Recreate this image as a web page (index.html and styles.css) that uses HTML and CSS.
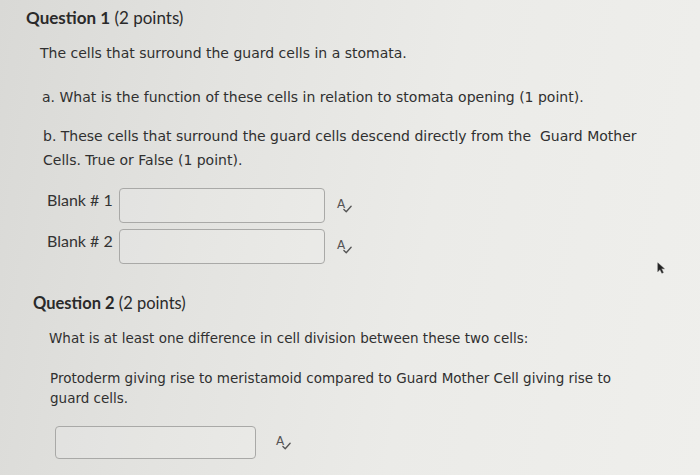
FILE: index.html
```html
<!DOCTYPE html>
<html>
<head>
<meta charset="utf-8">
<link rel="stylesheet" href="styles.css">
</head>
<body>
<div class="screen">
  <section class="question q1">
    <h2 class="qtitle"><b>Question 1</b> (2 points)</h2>
    <div class="qbody">
      <p class="intro">The cells that surround the guard cells in a stomata.</p>
      <p class="part-a">a. What is the function of these cells in relation to stomata opening (1 point).</p>
      <p class="part-b">b. These cells that surround the guard cells descend directly from the&nbsp; Guard Mother Cells. True or False (1 point).</p>
      <div class="blanks">
        <div class="blank-row">
          <span class="blank-label">Blank # 1</span>
          <span class="field"></span>
          <span class="spell"><span class="spell-a">A</span><svg class="spell-check" viewBox="0 0 10 8"><path d="M1 4.5 L3.6 7 L9 1" fill="none" stroke="#555" stroke-width="1.5" stroke-linecap="round" stroke-linejoin="round"/></svg></span>
        </div>
        <div class="blank-row">
          <span class="blank-label">Blank # 2</span>
          <span class="field"></span>
          <span class="spell"><span class="spell-a">A</span><svg class="spell-check" viewBox="0 0 10 8"><path d="M1 4.5 L3.6 7 L9 1" fill="none" stroke="#555" stroke-width="1.5" stroke-linecap="round" stroke-linejoin="round"/></svg></span>
        </div>
      </div>
    </div>
  </section>
  <section class="question q2">
    <h2 class="qtitle"><b>Question 2</b> (2 points)</h2>
    <div class="qbody">
      <p class="prompt">What is at least one difference in cell division between these two cells:</p>
      <p class="detail">Protoderm giving rise to meristamoid compared to Guard Mother Cell giving rise to guard cells.</p>
      <div class="answer-row">
        <span class="field wide"></span>
        <span class="spell"><span class="spell-a">A</span><svg class="spell-check" viewBox="0 0 10 8"><path d="M1 4.5 L3.6 7 L9 1" fill="none" stroke="#555" stroke-width="1.5" stroke-linecap="round" stroke-linejoin="round"/></svg></span>
      </div>
    </div>
  </section>
  <svg class="cursor" viewBox="0 0 12 16"><path d="M1 1 L1 13 L4 10 L6.5 15 L8.5 14 L6 9 L10 9 Z" fill="#222" stroke="#555" stroke-width="0.6"/></svg>
</div>
</body>
</html>
```
FILE: styles.css
```css
html, body {
  margin: 0;
  padding: 0;
}
body {
  width: 700px;
  height: 475px;
  overflow: hidden;
  background: linear-gradient(100deg, #d9d9d6 0%, #e3e3e0 30%, #ebebe8 60%, #efefec 100%);
  color: #333;
}
.screen {
  position: relative;
  width: 700px;
  height: 475px;
}
.question {
  display: flex;
  flex-direction: column;
}
.q1 {
  padding: 8px 0 0 26px;
}
.q2 {
  padding: 29px 0 0 33px;
}
.qtitle {
  margin: 0;
  font-family: Lato, "Liberation Sans", sans-serif;
  font-weight: 400;
  font-size: 17px;
  line-height: 20px;
  color: #2a2a2a;
}
.q2 .qtitle {
  font-size: 16.5px;
}
.qtitle b {
  font-weight: 700;
}
.q1 .qbody {
  padding-left: 14px;
}
.q2 .qbody {
  padding-left: 16px;
}
.qbody p {
  margin: 0;
  font-family: "DejaVu Sans", Verdana, sans-serif;
  font-size: 14px;
  line-height: 20px;
  color: #303030;
}
.q2 .qbody p {
  font-size: 13.5px;
}
.intro {
  margin-top: 15px !important;
}
.part-a {
  margin-top: 24px !important;
  padding-left: 2px;
}
.part-b {
  margin-top: 17px !important;
  padding-left: 3px;
  line-height: 24px !important;
  width: 600px;
}
.blanks {
  margin-top: 16px;
  display: flex;
  flex-direction: column;
  gap: 6px;
  padding-left: 7px;
}
.blank-row {
  display: flex;
  align-items: center;
  gap: 6px;
}
.blank-label {
  flex-shrink: 0;
  white-space: nowrap;
  width: 66px;
  font-family: Lato, "Liberation Sans", sans-serif;
  font-size: 16px;
  line-height: 20px;
  color: #333;
  margin-top: -12px;
}
.field {
  display: block;
  flex-shrink: 0;
  width: 204px;
  height: 33px;
  border: 1px solid #a9a9a7;
  border-radius: 4px;
  background: rgba(255, 255, 255, 0.12);
}
.field.wide {
  width: 199px;
  height: 31px;
}
.spell {
  display: inline-flex;
  position: relative;
  width: 15px;
  height: 16px;
  margin-left: 6px;
}
.spell-a {
  font-family: "DejaVu Sans", sans-serif;
  font-size: 12px;
  line-height: 12px;
  color: #555;
}
.spell-check {
  position: absolute;
  left: 6px;
  top: 7px;
  width: 9px;
  height: 8px;
}
.prompt {
  margin-top: 15px !important;
}
.detail {
  margin-top: 20px !important;
  padding-left: 1px;
  width: 590px;
}
.answer-row {
  margin-top: 18px;
  padding-left: 6px;
  display: flex;
  align-items: center;
  gap: 14px;
}
.cursor {
  position: absolute;
  left: 657px;
  top: 262px;
  width: 9px;
  height: 12px;
}
```
